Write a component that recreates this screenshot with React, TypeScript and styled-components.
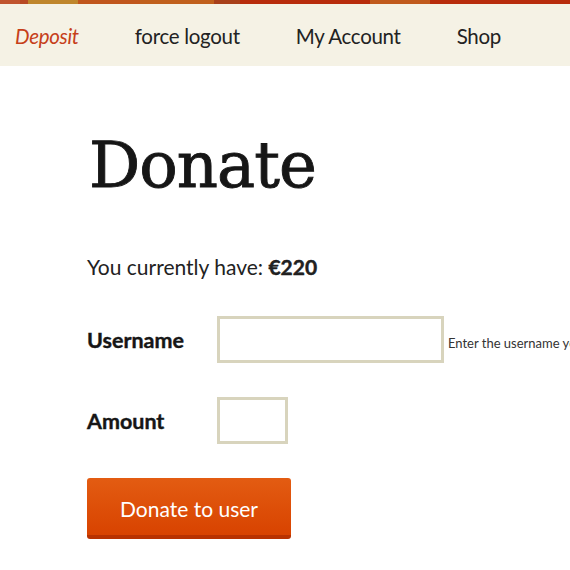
import { createGlobalStyle, styled } from "styled-components";

type Segment = {
  width: number;
  color: string;
};

const stripe: Segment[] = [
  { width: 20, color: "#c0542e" },
  { width: 8, color: "#b84a24" },
  { width: 50, color: "#bf862c" },
  { width: 62, color: "#c0561c" },
  { width: 74, color: "#c0601c" },
  { width: 26, color: "#a8401a" },
  { width: 130, color: "#b82c0c" },
  { width: 60, color: "#c05a1c" },
  { width: 140, color: "#b82c0c" },
];

const navItems = ["Deposit", "force logout", "My Account", "Shop"];

const GlobalStyle = createGlobalStyle`
  html, body {
    margin: 0;
    padding: 0;
    background: #ffffff;
  }
  body {
    font-family: "Lato", "Open Sans", sans-serif;
    color: #1b1b1b;
  }
`;

const Stripe = styled.div`
  display: flex;
  height: 4px;
  overflow: hidden;
`;

const StripePiece = styled.div<{ $color: string; $w: number }>`
  flex: 0 0 ${({ $w }) => $w}px;
  background: ${({ $color }) => $color};
  &:last-child {
    flex: 1 1 auto;
  }
`;

const NavBar = styled.nav`
  display: flex;
  align-items: center;
  gap: 56px;
  box-sizing: border-box;
  height: 62px;
  padding: 2px 15px 0;
  background: #f5f2e5;
`;

const NavLink = styled.a<{ $active?: boolean }>`
  font-size: 20.5px;
  color: ${({ $active }) => ($active ? "#c6401a" : "#222222")};
  font-style: ${({ $active }) => ($active ? "italic" : "normal")};
  text-decoration: none;
  letter-spacing: -0.3px;
`;

const Main = styled.main`
  padding: 62px 0 0 87px;
`;

const Title = styled.h1`
  margin: 0 0 0 2px;
  font-family: "DejaVu Serif", "Liberation Serif", serif;
  font-weight: 400;
  font-size: 64px;
  line-height: 74px;
  color: #161616;
  letter-spacing: -1px;
  -webkit-text-stroke: 0.9px #161616;
`;

const Balance = styled.p`
  margin: 52px 0 0;
  font-size: 21px;
  line-height: 26px;
  color: #222222;

  strong {
    font-weight: 700;
    -webkit-text-stroke: 0.4px #161616;
  }
`;

const Form = styled.form`
  display: flex;
  flex-direction: column;
  gap: 34px;
  margin-top: 36px;
`;

const Row = styled.div`
  display: flex;
  align-items: center;
`;

const Label = styled.label`
  flex: 0 0 130px;
  font-size: 21.5px;
  font-weight: 700;
  color: #161616;
  -webkit-text-stroke: 0.4px #161616;
`;

const Field = styled.input<{ $w: number }>`
  box-sizing: border-box;
  width: ${({ $w }) => $w}px;
  height: 47px;
  border: 3px solid #d8d4bd;
  background: #ffffff;
  outline: none;
  font-family: inherit;
  font-size: 18px;
  padding: 0 8px;
`;

const Hint = styled.span`
  margin-left: 4px;
  margin-top: 6px;
  font-size: 13px;
  color: #333333;
  white-space: nowrap;
`;

const Button = styled.button`
  align-self: flex-start;
  box-sizing: border-box;
  width: 204px;
  height: 61px;
  margin-top: 0;
  border: none;
  border-bottom: 4px solid #b83200;
  border-radius: 3px;
  background: linear-gradient(#e35c12, #d84300);
  color: #ffffff;
  font-family: inherit;
  font-size: 21px;
  padding: 3px 0 0;
  cursor: pointer;
`;

export default function App() {
  return (
    <>
      <GlobalStyle />
      <Stripe>
        {stripe.map((s, i) => (
          <StripePiece key={i} $color={s.color} $w={s.width} />
        ))}
      </Stripe>
      <NavBar>
        {navItems.map((item, i) => (
          <NavLink key={item} href="#" $active={i === 0}>
            {item}
          </NavLink>
        ))}
      </NavBar>
      <Main>
        <Title>Donate</Title>
        <Balance>
          You currently have: <strong>€220</strong>
        </Balance>
        <Form onSubmit={(e) => e.preventDefault()}>
          <Row>
            <Label htmlFor="username">Username</Label>
            <Field id="username" $w={227} />
            <Hint>Enter the username you want to donate to</Hint>
          </Row>
          <Row>
            <Label htmlFor="amount">Amount</Label>
            <Field id="amount" $w={71} />
          </Row>
          <Button type="submit">Donate to user</Button>
        </Form>
      </Main>
    </>
  );
}
